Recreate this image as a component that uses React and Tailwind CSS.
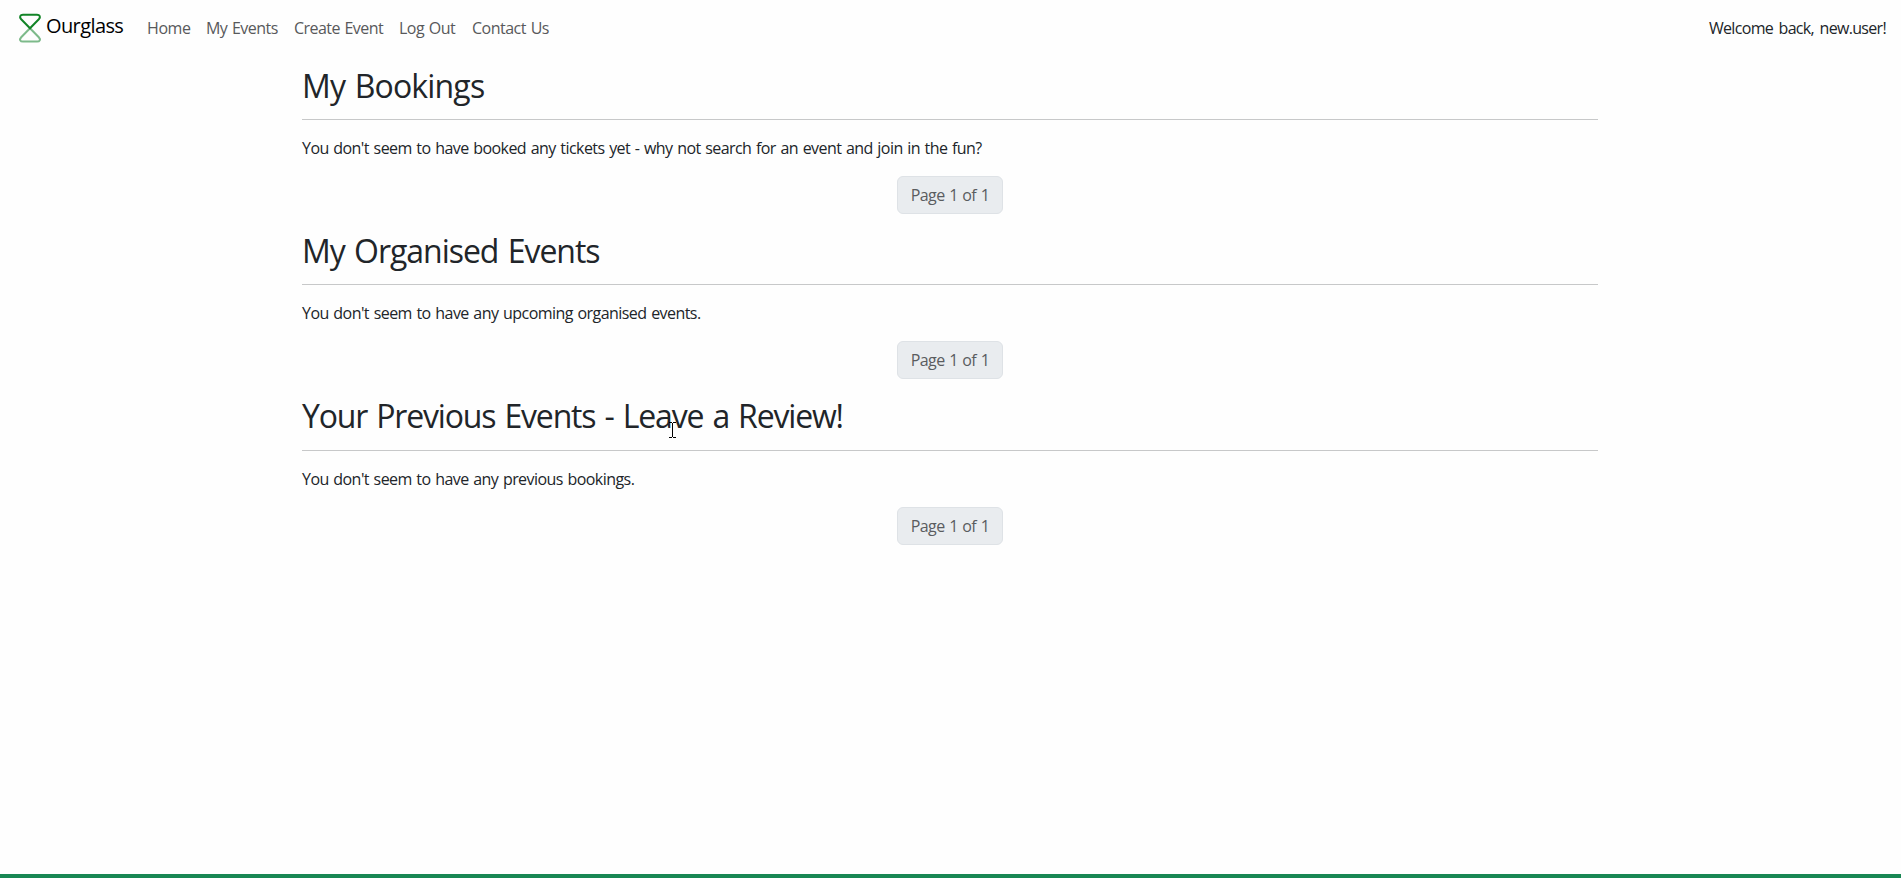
const links = [
  { label: 'Home', style: 'w-[43px] tracking-[-0.4px]' },
  { label: 'My Events', style: 'w-[72px] tracking-[-0.52px]' },
  { label: 'Create Event', style: 'w-[89px] tracking-[-0.55px]' },
  { label: 'Log Out', style: 'w-[57px] tracking-[-0.5px]' },
  { label: 'Contact Us', style: 'w-[78px] tracking-[-0.5px]' },
];

const sections = [
  {
    title: 'My Bookings',
    titleStyle: 'tracking-[-0.83px]',
    text: "You don't seem to have booked any tickets yet - why not search for an event and join in the fun?",
    textStyle: 'tracking-[-0.557px]',
  },
  {
    title: 'My Organised Events',
    titleStyle: 'tracking-[-1.03px]',
    text: "You don't seem to have any upcoming organised events.",
    textStyle: 'tracking-[-0.55px]',
  },
  {
    title: 'Your Previous Events - Leave a Review!',
    titleStyle: 'tracking-[-1.18px]',
    text: "You don't seem to have any previous bookings.",
    textStyle: 'tracking-[-0.555px]',
    cursor: true,
  },
];

function Logo() {
  return (
    <svg className="h-8 w-6 shrink-0" viewBox="0 0 24 32" fill="none" strokeWidth="2">
      <path d="M12 16.2 L3.2 25.2 C1 27.6 2.2 29.6 5 29.6 H19 C21.8 29.6 23 27.6 20.8 25.2 Z" stroke="#7dba8a" />
      <path d="M12 16.2 L3.2 7.2 C1 4.8 2.2 2.8 5 2.8 H19 C21.8 2.8 23 4.8 20.8 7.2 Z" stroke="#128427" />
    </svg>
  );
}

function TextCursor() {
  return (
    <svg className="absolute left-[367px] top-[27px] h-4 w-[7px]" viewBox="0 0 7 16" fill="none" stroke="#000" shapeRendering="crispEdges">
      <path d="M0 0.5H3M4 0.5H7M3.5 1V15M0 15.5H3M4 15.5H7" />
    </svg>
  );
}

function Section({ title, titleStyle, text, textStyle, cursor }) {
  return (
    <section className="relative">
      <h2 className={`h-[38.4px] pt-[2px] text-[32px] leading-[38.4px] [word-spacing:2px] whitespace-nowrap ${titleStyle}`}>{title}</h2>
      <hr className="my-4 border-t border-[#c7c8c9]" />
      <p className={`mb-4 text-base leading-6 [word-spacing:1px] whitespace-nowrap ${textStyle}`}>{text}</p>
      <div className="mb-4 flex justify-center">
        <span className="flex h-[38px] w-[106px] items-center justify-center rounded-md border border-[#dee2e6] bg-[#e9ecef] text-base leading-6 tracking-[-0.58px] [word-spacing:1px] whitespace-nowrap text-[#5a5c5f]">
          Page 1 of 1
        </span>
      </div>
      {cursor && <TextCursor />}
    </section>
  );
}

export default function App() {
  return (
    <div className="flex h-screen flex-col overflow-hidden bg-[#fefefe] font-['Open_Sans','Noto_Sans',sans-serif] text-[#212529]">
      <header className="flex h-14 shrink-0 items-center pr-[15px] pl-[18px]">
        <a className="flex items-center gap-1 text-xl leading-[30px] tracking-[-0.6px] text-black">
          <Logo />
          <span className="w-[78px] pb-1 whitespace-nowrap">Ourglass</span>
        </a>
        <nav className="ml-[23px] flex gap-4 pb-px text-base leading-6 [word-spacing:1px] text-[#58595b]">
          {links.map((link) => (
            <a key={link.label} className={`whitespace-nowrap ${link.style}`}>{link.label}</a>
          ))}
        </nav>
        <span className="ml-auto pb-px text-base leading-6 tracking-[-0.68px] [word-spacing:2px] whitespace-nowrap">Welcome back, new.user!</span>
      </header>
      <div className="flex flex-1 justify-center pr-px">
        <main className="w-[1320px] px-3 pt-[8.6px]">
          {sections.map((section) => (
            <Section key={section.title} {...section} />
          ))}
        </main>
      </div>
      <footer className="h-1 shrink-0 bg-[#198754]" />
    </div>
  );
}
